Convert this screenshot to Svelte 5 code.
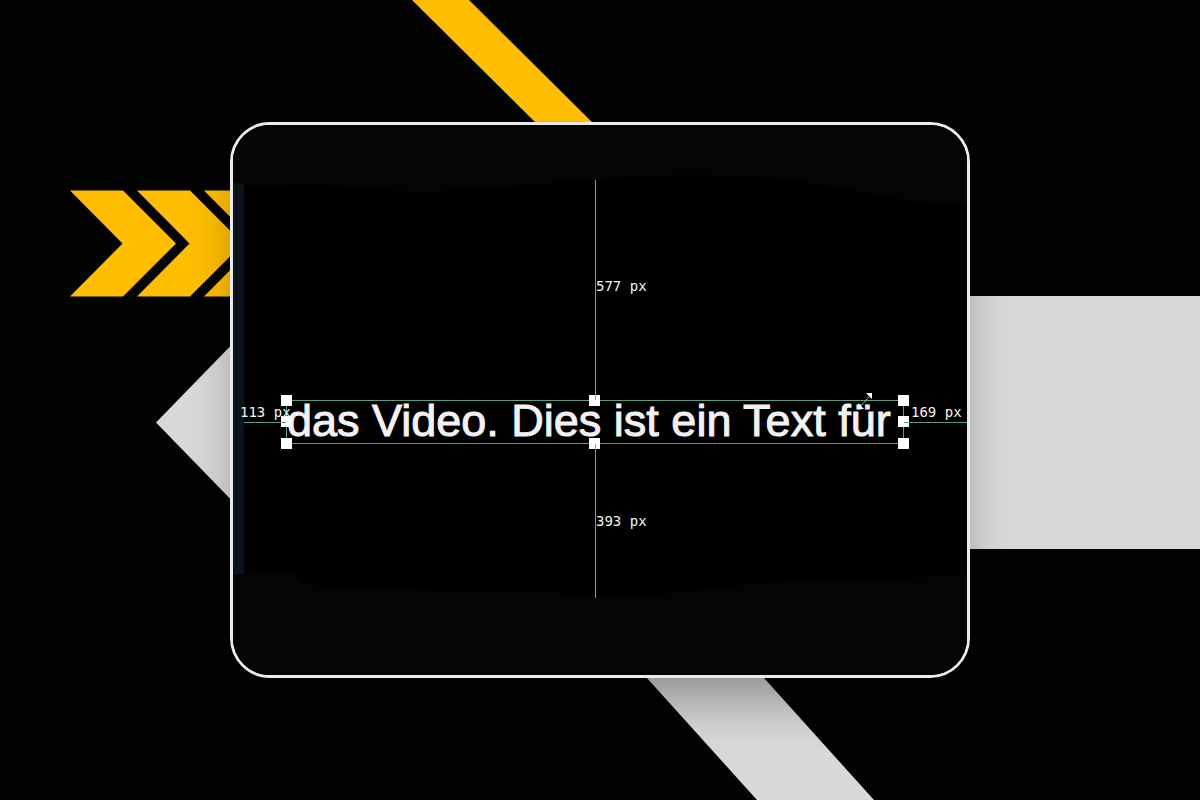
<script lang="ts">
  let text: string = 'das Video. Dies ist ein Text für';

  const distances = [
    { side: 'top', value: 577 },
    { side: 'left', value: 113 },
    { side: 'right', value: 169 },
    { side: 'bottom', value: 393 },
  ];

  const handles: string[] = [
    'top left',
    'top center',
    'top right',
    'middle left',
    'middle right',
    'bottom left',
    'bottom center',
    'bottom right',
  ];

  const chevrons: number[] = [0, 67, 134];
</script>

<main class="stage">
  <svg class="backdrop" viewBox="0 0 1200 800" preserveAspectRatio="xMidYMid slice" aria-hidden="true">
    <g fill="#ffbe02">
      <path d="M412 0H469L603 133H546Z" />
      {#each chevrons as x}
        <path d="M70 190.500H123L176 243.500L123 296.500H70L122.500 243.500Z" transform="translate({x} 0)" />
      {/each}
    </g>
    <g fill="#d8d8d6">
      <path d="M156 422.500L279 296H1200V549H279Z" />
      <path d="M628 657H745L874 800H757Z" />
    </g>
  </svg>

  <section class="card">
    <svg class="scene" viewBox="0 0 734 550" preserveAspectRatio="none" aria-hidden="true">
      <rect width="734" height="550" fill="#000" />
      <rect y="50" width="11" height="412" fill="#0b131c" />
      <g fill="#040404">
        <path d="M0 0H734V81C660 78 620 62 560 56C440 40 330 60 210 66C150 69 110 58 60 60C30 62 12 62 0 57Z" />
        <path d="M0 450C20 447 36 446 50 446C66 446 64 457 82 460C140 463 190 464 240 468C290 462 320 468 362 471C430 472 480 462 530 458C600 452 670 454 734 450V550H0Z" />
      </g>
    </svg>

    <div class="guides">
      {#each distances as item}
        <div class="distance {item.side}">
          <span class="label">{item.value} px</span>
        </div>
      {/each}

      <div class="selection">
        <p class="text">{text}</p>
        {#each handles as position}
          <span class="handle {position}"></span>
        {/each}
        <svg class="cursor" viewBox="0 0 16 18" aria-hidden="true">
          <path d="M3 15L13 4" stroke="#eee" stroke-dasharray="2 1" />
          <path d="M9 1H15V7L13 5L11 3ZM1 11V17H7L5 15L3 13Z" fill="#fff" />
        </svg>
      </div>
    </div>
  </section>
</main>

<style>
  :global(body) {
    margin: 0;
    background: #030303;
  }

  .stage {
    position: relative;
    display: flex;
    box-sizing: border-box;
    min-height: 100vh;
    padding: 122px 230px;
    overflow: hidden;
  }

  .backdrop {
    position: absolute;
    inset: 0;
    width: 100%;
    height: 100%;
  }

  .card {
    position: relative;
    display: flex;
    flex: 1;
    border: 3px solid #ebebe9;
    border-radius: 40px;
    overflow: hidden;
    background: #000;
    box-shadow: 0 32px 48px -8px rgba(0, 0, 0, 0.32);
  }

  .scene {
    position: absolute;
    inset: 0;
    width: 100%;
    height: 100%;
  }

  .guides {
    position: relative;
    flex: 1;
    display: grid;
    grid-template-columns: 42px 1fr 63px;
    grid-template-rows: 220fr 44px 154fr;
    grid-template-areas:
      '. top .'
      'left selection right'
      '. bottom .';
    padding: 55px 0 77px 11px;
  }

  .distance {
    position: relative;
    z-index: 2;
    display: flex;
    align-items: center;
  }

  .distance::before {
    content: '';
    position: absolute;
    background: #78a090;
  }

  .distance.top {
    grid-area: top;
  }

  .distance.bottom {
    grid-area: bottom;
  }

  .distance.left {
    grid-area: left;
  }

  .distance.right {
    grid-area: right;
  }

  .top::before,
  .bottom::before {
    top: 0;
    bottom: 0;
    left: 50%;
    width: 1px;
  }

  .left::before,
  .right::before {
    top: 50%;
    left: 0;
    right: 0;
    height: 1px;
    background: #5f9c84;
  }

  .distance.top .label,
  .distance.bottom .label {
    margin-left: 50%;
  }

  .distance.top .label {
    padding-bottom: 12px;
  }

  .distance.left,
  .distance.right {
    align-items: flex-start;
  }

  .distance.left .label {
    margin-left: -5px;
  }

  .distance.right .label {
    margin-left: 6px;
  }

  .label {
    padding: 4px 0 4px 1px;
    color: #f4f4f4;
    font: 14px/16px 'DejaVu Sans Mono', monospace;
    white-space: nowrap;
  }

  .selection {
    position: relative;
    grid-area: selection;
    border: 1px solid #5f9c84;
    box-sizing: border-box;
  }

  .text {
    margin: 0;
    color: #f2f2f2;
    font: 45px/40px 'Liberation Sans', Arial, sans-serif;
    white-space: nowrap;
    -webkit-text-stroke: 1px #f2f2f2;
  }

  .handle {
    position: absolute;
    width: 11px;
    height: 11px;
    margin: -6px;
    background: #fff;
  }

  .handle.top {
    top: 0;
  }

  .handle.middle {
    top: 50%;
  }

  .handle.bottom {
    bottom: 0;
  }

  .handle.left {
    left: 0;
  }

  .handle.center {
    left: 50%;
  }

  .handle.right {
    right: 0;
  }

  .cursor {
    position: absolute;
    top: -9px;
    right: 30px;
    width: 16px;
    height: 18px;
  }
</style>
